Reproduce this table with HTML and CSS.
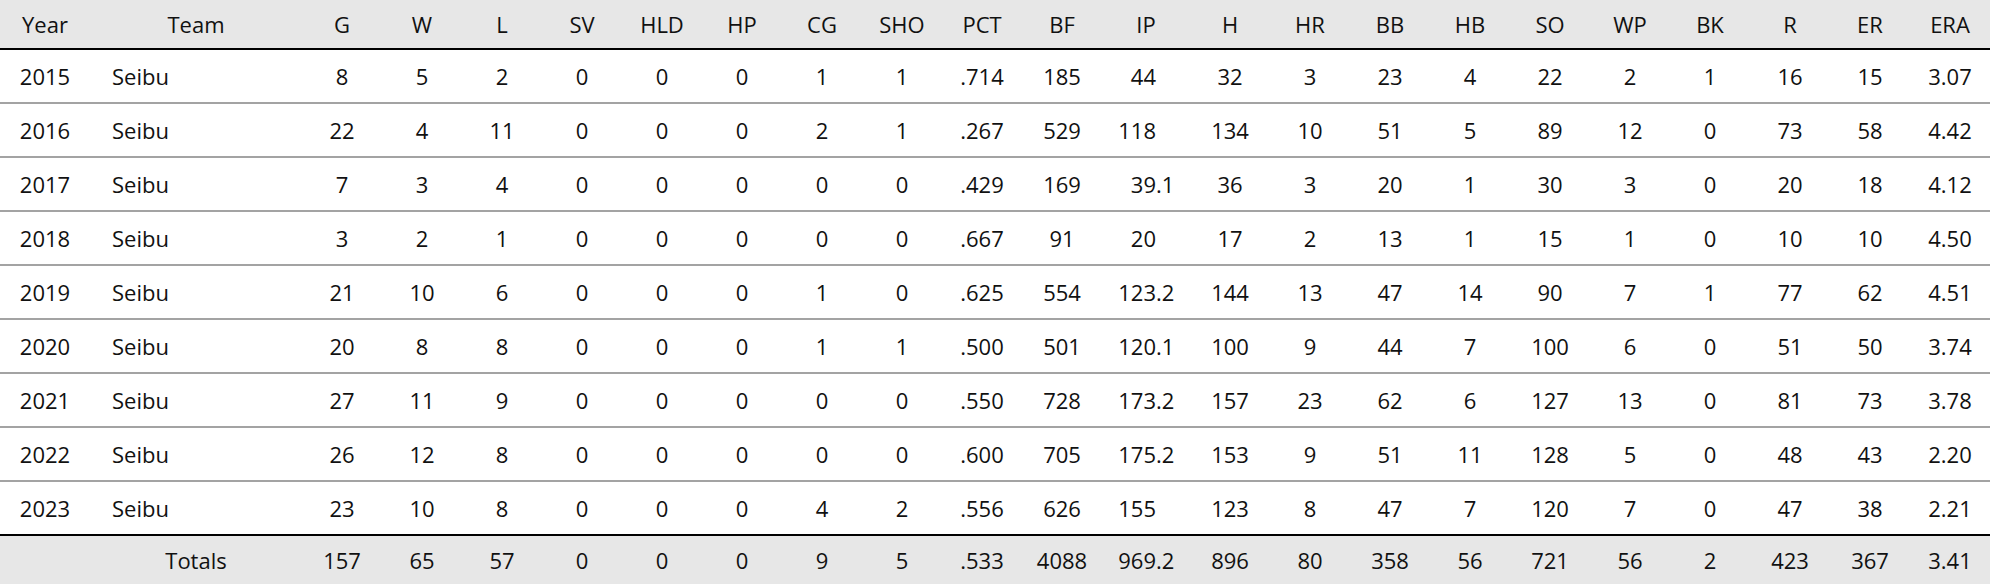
FILE: index.html
```html
<!DOCTYPE html>
<html>
<head>
<meta charset="utf-8">
<link rel="stylesheet" href="styles.css">
</head>
<body>
<table class="stats">
  <colgroup>
    <col class="c-year"><col class="c-team">
    <col class="c-n"><col class="c-n"><col class="c-n"><col class="c-n"><col class="c-n"><col class="c-n"><col class="c-n"><col class="c-n"><col class="c-n"><col class="c-n">
    <col class="c-ip">
    <col class="c-n"><col class="c-n"><col class="c-n"><col class="c-n"><col class="c-n"><col class="c-n"><col class="c-n"><col class="c-n"><col class="c-n"><col class="c-n">
  </colgroup>
  <thead>
    <tr><th>Year</th><th>Team</th><th>G</th><th>W</th><th>L</th><th>SV</th><th>HLD</th><th>HP</th><th>CG</th><th>SHO</th><th>PCT</th><th>BF</th><th>IP</th><th>H</th><th>HR</th><th>BB</th><th>HB</th><th>SO</th><th>WP</th><th>BK</th><th>R</th><th>ER</th><th>ERA</th></tr>
  </thead>
  <tbody>
    <tr><td>2015</td><td class="team">Seibu</td><td>8</td><td>5</td><td>2</td><td>0</td><td>0</td><td>0</td><td>1</td><td>1</td><td>.714</td><td>185</td><td><span class="int">44</span><span class="frac"></span></td><td>32</td><td>3</td><td>23</td><td>4</td><td>22</td><td>2</td><td>1</td><td>16</td><td>15</td><td>3.07</td></tr>
    <tr><td>2016</td><td class="team">Seibu</td><td>22</td><td>4</td><td>11</td><td>0</td><td>0</td><td>0</td><td>2</td><td>1</td><td>.267</td><td>529</td><td><span class="int">118</span><span class="frac"></span></td><td>134</td><td>10</td><td>51</td><td>5</td><td>89</td><td>12</td><td>0</td><td>73</td><td>58</td><td>4.42</td></tr>
    <tr><td>2017</td><td class="team">Seibu</td><td>7</td><td>3</td><td>4</td><td>0</td><td>0</td><td>0</td><td>0</td><td>0</td><td>.429</td><td>169</td><td><span class="int">39</span><span class="frac">.1</span></td><td>36</td><td>3</td><td>20</td><td>1</td><td>30</td><td>3</td><td>0</td><td>20</td><td>18</td><td>4.12</td></tr>
    <tr><td>2018</td><td class="team">Seibu</td><td>3</td><td>2</td><td>1</td><td>0</td><td>0</td><td>0</td><td>0</td><td>0</td><td>.667</td><td>91</td><td><span class="int">20</span><span class="frac"></span></td><td>17</td><td>2</td><td>13</td><td>1</td><td>15</td><td>1</td><td>0</td><td>10</td><td>10</td><td>4.50</td></tr>
    <tr><td>2019</td><td class="team">Seibu</td><td>21</td><td>10</td><td>6</td><td>0</td><td>0</td><td>0</td><td>1</td><td>0</td><td>.625</td><td>554</td><td><span class="int">123</span><span class="frac">.2</span></td><td>144</td><td>13</td><td>47</td><td>14</td><td>90</td><td>7</td><td>1</td><td>77</td><td>62</td><td>4.51</td></tr>
    <tr><td>2020</td><td class="team">Seibu</td><td>20</td><td>8</td><td>8</td><td>0</td><td>0</td><td>0</td><td>1</td><td>1</td><td>.500</td><td>501</td><td><span class="int">120</span><span class="frac">.1</span></td><td>100</td><td>9</td><td>44</td><td>7</td><td>100</td><td>6</td><td>0</td><td>51</td><td>50</td><td>3.74</td></tr>
    <tr><td>2021</td><td class="team">Seibu</td><td>27</td><td>11</td><td>9</td><td>0</td><td>0</td><td>0</td><td>0</td><td>0</td><td>.550</td><td>728</td><td><span class="int">173</span><span class="frac">.2</span></td><td>157</td><td>23</td><td>62</td><td>6</td><td>127</td><td>13</td><td>0</td><td>81</td><td>73</td><td>3.78</td></tr>
    <tr><td>2022</td><td class="team">Seibu</td><td>26</td><td>12</td><td>8</td><td>0</td><td>0</td><td>0</td><td>0</td><td>0</td><td>.600</td><td>705</td><td><span class="int">175</span><span class="frac">.2</span></td><td>153</td><td>9</td><td>51</td><td>11</td><td>128</td><td>5</td><td>0</td><td>48</td><td>43</td><td>2.20</td></tr>
    <tr class="last"><td>2023</td><td class="team">Seibu</td><td>23</td><td>10</td><td>8</td><td>0</td><td>0</td><td>0</td><td>4</td><td>2</td><td>.556</td><td>626</td><td><span class="int">155</span><span class="frac"></span></td><td>123</td><td>8</td><td>47</td><td>7</td><td>120</td><td>7</td><td>0</td><td>47</td><td>38</td><td>2.21</td></tr>
  </tbody>
  <tfoot>
    <tr><td></td><td>Totals</td><td>157</td><td>65</td><td>57</td><td>0</td><td>0</td><td>0</td><td>9</td><td>5</td><td>.533</td><td>4088</td><td><span class="int">969</span><span class="frac">.2</span></td><td>896</td><td>80</td><td>358</td><td>56</td><td>721</td><td>56</td><td>2</td><td>423</td><td>367</td><td>3.41</td></tr>
  </tfoot>
</table>
</body>
</html>
```

FILE: styles.css
```css
html, body {
  margin: 0;
  padding: 0;
  background: #ffffff;
}

.stats {
  width: 1990px;
  table-layout: fixed;
  border-collapse: separate;
  border-spacing: 0;
  font-family: "Open Sans", "Noto Sans", sans-serif;
  font-size: 22px;
  color: #111111;
}

.c-year { width: 90px; }
.c-team { width: 212px; }
.c-n { width: 80px; }
.c-ip { width: 88px; }

.stats th,
.stats td {
  padding: 0;
  text-align: center;
  vertical-align: middle;
  white-space: nowrap;
  box-sizing: border-box;
}

.stats th {
  font-weight: normal;
  background: #e7e7e7;
  height: 50px;
  border-bottom: 2px solid #000000;
}

.stats tbody td {
  height: 54px;
  border-bottom: 2px solid #a3a3a3;
}

.stats tbody tr.last td {
  border-bottom: 2px solid #000000;
}

.stats td.team {
  text-align: left;
  padding-left: 22px;
}

.stats tfoot td {
  height: 48px;
  background: #e7e7e7;
}

.int {
  display: inline-block;
  width: 40px;
  text-align: right;
}

.frac {
  display: inline-block;
  width: 20px;
  text-align: left;
}
```
